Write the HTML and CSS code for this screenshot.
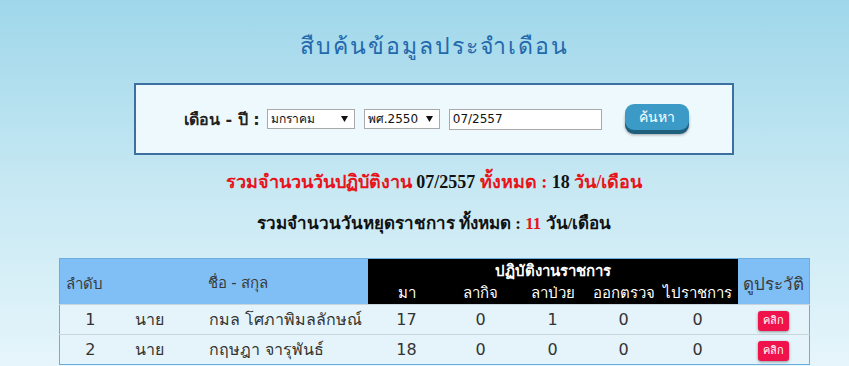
FILE: index.html
```html
<!DOCTYPE html>
<html lang="th">
<head>
  <meta charset="UTF-8" />
  <title>สืบค้นข้อมูลประจำเดือน</title>
  <link rel="stylesheet" href="styles.css">
</head>
<body>
  <div class="page">
    <h1 class="title">สืบค้นข้อมูลประจำเดือน</h1>

    <div class="search-box">
      <span class="search-label">เดือน - ปี :</span>
      <select class="sel-month">
        <option>มกราคม</option>
      </select>
      <select class="sel-year">
        <option>พศ.2550</option>
      </select>
      <input class="txt-date" type="text" value="07/2557" />
      <button class="btn-search">ค้นหา</button>
    </div>

    <p class="summary red">รวมจำนวนวันปฏิบัติงาน <span class="black">07/2557</span> ทั้งหมด : <span class="black">18</span> วัน/เดือน</p>
    <p class="summary">รวมจำนวนวันหยุดราชการ <span class="serif">ทั้งหมด : <span class="red">11</span> วัน/เดือน</span></p>

    <table class="report">
      <colgroup>
        <col class="w-no"><col class="w-pre"><col class="w-name">
        <col class="w-ma"><col class="w-kit"><col class="w-sick"><col class="w-out"><col class="w-gov">
        <col class="w-hist">
      </colgroup>
      <thead>
        <tr>
          <th rowspan="2" class="c-no">ลำดับ</th>
          <th rowspan="2" colspan="2" class="c-name">ชื่อ - สกุล</th>
          <th colspan="5" class="dark top">ปฏิบัติงานราชการ</th>
          <th rowspan="2" class="c-hist">ดูประวัติ</th>
        </tr>
        <tr>
          <th class="dark sub">มา</th>
          <th class="dark sub">ลากิจ</th>
          <th class="dark sub">ลาป่วย</th>
          <th class="dark sub">ออกตรวจ</th>
          <th class="dark sub">ไปราชการ</th>
        </tr>
      </thead>
      <tbody>
        <tr>
          <td class="center">1</td>
          <td class="center">นาย</td>
          <td class="name">กมล โศภาพิมลลักษณ์</td>
          <td class="center">17</td>
          <td class="center">0</td>
          <td class="center">1</td>
          <td class="center">0</td>
          <td class="center">0</td>
          <td class="center"><a class="btn-click">คลิก</a></td>
        </tr>
        <tr>
          <td class="center">2</td>
          <td class="center">นาย</td>
          <td class="name">กฤษฎา จารุพันธ์</td>
          <td class="center">18</td>
          <td class="center">0</td>
          <td class="center">0</td>
          <td class="center">0</td>
          <td class="center">0</td>
          <td class="center"><a class="btn-click">คลิก</a></td>
        </tr>
      </tbody>
    </table>
  </div>
</body>
</html>
```

FILE: styles.css
```css
html, body {
  margin: 0;
  height: 100%;
}
body {
  font-family: Tahoma, "DejaVu Sans", sans-serif;
  background: linear-gradient(to bottom, #9fd7ea 0%, #c6e8f3 50%, #e6f5fb 100%);
  color: #333;
}
.page {
  width: 750px;
  margin-left: 59px;
  padding-top: 30px;
}
.title {
  margin: 0;
  text-align: center;
  font-size: 23px;
  font-weight: normal;
  letter-spacing: 2px;
  color: #2468ac;
  line-height: 32px;
}
.search-box {
  margin: 21px auto 0;
  width: 548px;
  height: 68px;
  border: 2px solid #3d6fa0;
  background: #eef9fd;
  display: flex;
  align-items: center;
  padding-left: 48px;
}
.search-label {
  font-size: 16px;
  font-weight: bold;
  color: #222;
  margin-right: 7px;
}
select, input {
  font-family: Tahoma, "DejaVu Sans", sans-serif;
  font-size: 12px;
  height: 20px;
  border: 1px solid #a9a9a9;
  background: #fff;
  padding: 0 3px;
  color: #111;
}
select {
  appearance: none;
  -webkit-appearance: none;
  border-radius: 0;
  background: #fff url("data:image/svg+xml,%3Csvg xmlns='http://www.w3.org/2000/svg' width='7' height='6'%3E%3Cpath d='M0 0h7L3.5 6z' fill='%23111'/%3E%3C/svg%3E") no-repeat right 6px center;
}
.sel-month { width: 88px; margin-right: 9px; }
.sel-year { width: 76px; margin-right: 9px; }
.txt-date { width: 153px; height: 21px; box-sizing: border-box; }
.btn-search {
  margin-left: 23px;
  width: 64px;
  height: 26px;
  border: none;
  border-radius: 9px;
  background: #3c9bc6;
  color: #fff;
  font-size: 14px;
  font-family: Tahoma, "DejaVu Sans", sans-serif;
  box-shadow: 0 4px 0 #1f5f7e, 0 5px 3px rgba(0,0,0,0.35);
  margin-top: -4px;
}
.summary {
  margin: 0;
  text-align: center;
  font-family: "Liberation Serif", Tahoma, serif;
  font-weight: bold;
  font-size: 18px;
  color: #111;
}
.summary.red { color: #e8141b; margin-top: 12px; }
.summary .black { color: #111; }
.summary .red { color: #e8141b; }
.summary + .summary { margin-top: 13px; font-size: 17px; }

.report {
  margin-top: 22px;
  width: 751px;
  border-collapse: collapse;
  background: #e4f4fa;
  border: 1px solid #6aaedf;
  font-size: 16px;
  table-layout: fixed;
}
.w-no { width: 61px; }
.w-pre { width: 58px; }
.w-name { width: 189px; }
.w-ma { width: 78px; }
.w-kit { width: 70px; }
.w-sick { width: 74px; }
.w-out { width: 68px; }
.w-gov { width: 80px; }
.w-hist { width: 72px; }
.report th {
  background: #7fbff6;
  color: #3a3a3a;
  font-weight: normal;
  font-size: 15px;
  padding: 0;
}
.report th.dark {
  background: #000;
  color: #fff;
}
.report th.top { height: 22px; font-weight: bold; vertical-align: bottom; line-height: 20px; }
.report th.sub { height: 23px; vertical-align: bottom; line-height: 22px; }
.report th.c-no { text-align: left; padding-left: 6px; padding-top: 4px; }
.report th.c-name { padding-top: 2px; padding-right: 12px; }
.report th.c-hist { font-size: 17px; padding-top: 4px; }
.report td {
  height: 29px;
  border-top: 1px solid #c8d6dc;
  color: #333;
  padding: 0;
}
.report td.center { text-align: center; }
.report td.name { padding-left: 30px; }
.btn-click {
  display: inline-block;
  background: #f0124a;
  color: #fff;
  font-size: 11px;
  line-height: 14px;
  padding: 3px 5px;
  border-radius: 3px;
  box-shadow: 0 1px 3px rgba(0,0,0,0.4);
}
```
